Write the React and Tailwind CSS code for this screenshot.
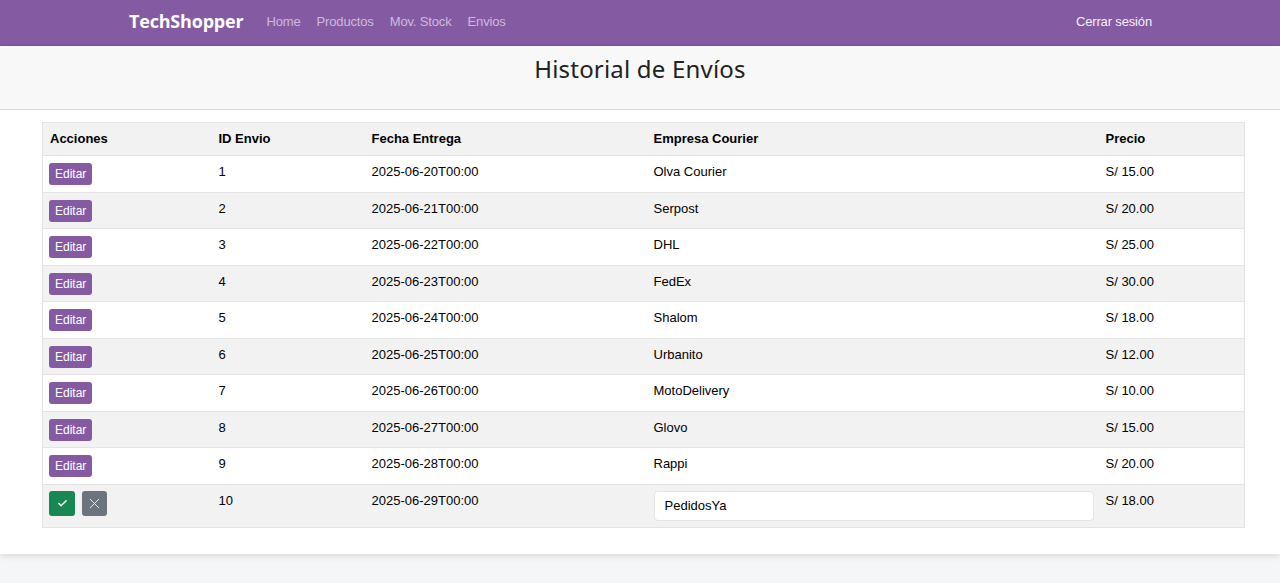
import { Check, X } from "lucide-react";

const envios = [
  { id: 1, fecha: "2025-06-20T00:00", empresa: "Olva Courier", precio: "S/ 15.00" },
  { id: 2, fecha: "2025-06-21T00:00", empresa: "Serpost", precio: "S/ 20.00" },
  { id: 3, fecha: "2025-06-22T00:00", empresa: "DHL", precio: "S/ 25.00" },
  { id: 4, fecha: "2025-06-23T00:00", empresa: "FedEx", precio: "S/ 30.00" },
  { id: 5, fecha: "2025-06-24T00:00", empresa: "Shalom", precio: "S/ 18.00" },
  { id: 6, fecha: "2025-06-25T00:00", empresa: "Urbanito", precio: "S/ 12.00" },
  { id: 7, fecha: "2025-06-26T00:00", empresa: "MotoDelivery", precio: "S/ 10.00" },
  { id: 8, fecha: "2025-06-27T00:00", empresa: "Glovo", precio: "S/ 15.00" },
  { id: 9, fecha: "2025-06-28T00:00", empresa: "Rappi", precio: "S/ 20.00" },
];

function Navbar() {
  return (
    <nav className="h-[46px] bg-[#845ba3] flex items-center justify-between pl-[129px] pr-[128px] border-b border-[#7a519a] pb-[2px]">
      <div className="flex items-center">
        <span className="text-white text-[18px] font-bold font-['Open_Sans',sans-serif] mr-[23px] tracking-[-0.2px]">
          TechShopper
        </span>
        <div className="flex gap-[16px] text-[13px] text-[#cdbadd] font-['Liberation_Sans',Arial,sans-serif] tracking-[-0.15px]">
          <span>Home</span>
          <span>Productos</span>
          <span>Mov. Stock</span>
          <span>Envios</span>
        </div>
      </div>
      <span className="text-[13px] text-[#f4eff8] font-['Liberation_Sans',Arial,sans-serif] tracking-[-0.15px]">
        Cerrar sesión
      </span>
    </nav>
  );
}

export default function App() {
  const cell = "px-2 pt-2 align-top leading-[16px]";
  return (
    <div className="min-h-[583px] bg-[#f5f6f8] font-['Liberation_Sans',Arial,sans-serif] text-[13px] text-black">
      <Navbar />
      <div className="bg-white shadow-[0_2px_6px_rgba(0,0,0,0.12)]">
        <div className="h-[64px] bg-[#f8f8f8] border-b border-[#d9d9d9] flex justify-center pt-[5px]">
          <h1 className="text-[24px] text-[#222] font-['Noto_Sans',sans-serif] tracking-[0.2px]">
            Historial de Envíos
          </h1>
        </div>
        <div className="pl-[42px] pr-[35px] pt-[12px] pb-[26px]">
          <table className="w-full table-fixed border-collapse border border-[#e3e3e3]">
            <colgroup>
              <col className="w-[169px]" />
              <col className="w-[152px]" />
              <col className="w-[282px]" />
              <col className="w-[452px]" />
              <col />
            </colgroup>
            <thead>
              <tr className="bg-[#f2f2f2] h-[33px] text-left font-bold">
                <th className="px-[7px] align-middle">Acciones</th>
                <th className="pl-[7px] pr-2 align-middle">ID Envio</th>
                <th className="px-2 align-middle">Fecha Entrega</th>
                <th className="px-2 align-middle">Empresa Courier</th>
                <th className="px-2 align-middle">Precio</th>
              </tr>
            </thead>
            <tbody>
              {envios.map((e, i) => (
                <tr
                  key={e.id}
                  className={`h-[36.5px] border-t border-[#e3e3e3] ${i % 2 === 1 ? "bg-[#f2f2f2]" : "bg-white"}`}
                >
                  <td className="px-[6px] pt-[7px] align-top">
                    <button className="h-[22px] px-[6px] bg-[#845ba3] text-white text-[12px] rounded-[3px] leading-[22px]">
                      Editar
                    </button>
                  </td>
                  <td className="pl-[7px] pr-2 pt-2 align-top leading-[16px]">{e.id}</td>
                  <td className={cell}>{e.fecha}</td>
                  <td className={cell}>{e.empresa}</td>
                  <td className={cell}>{e.precio}</td>
                </tr>
              ))}
              <tr className="h-[43px] border-t border-[#e3e3e3] bg-[#f2f2f2]">
                <td className="px-[6px] pt-[6px] align-top">
                  <div className="flex gap-[7px]">
                    <button className="w-[26px] h-[25px] bg-[#198754] rounded-[3px] flex items-center justify-center text-white">
                      <Check size={11} strokeWidth={3} />
                    </button>
                    <button className="w-[25px] h-[25px] bg-[#6c757d] rounded-[3px] flex items-center justify-center text-[#e9ecef]">
                      <X size={17} strokeWidth={1.3} />
                    </button>
                  </div>
                </td>
                <td className="pl-[7px] pr-2 pt-2 align-top leading-[16px]">10</td>
                <td className={cell}>2025-06-29T00:00</td>
                <td className="pl-2 pr-[4px] pt-[6px] align-top">
                  <input
                    readOnly
                    value="PedidosYa"
                    className="w-full h-[30px] bg-white border border-[#e4e4e4] rounded-[4px] px-[10px] text-[13px] outline-none"
                  />
                </td>
                <td className={cell}>S/ 18.00</td>
              </tr>
            </tbody>
          </table>
        </div>
      </div>
    </div>
  );
}
